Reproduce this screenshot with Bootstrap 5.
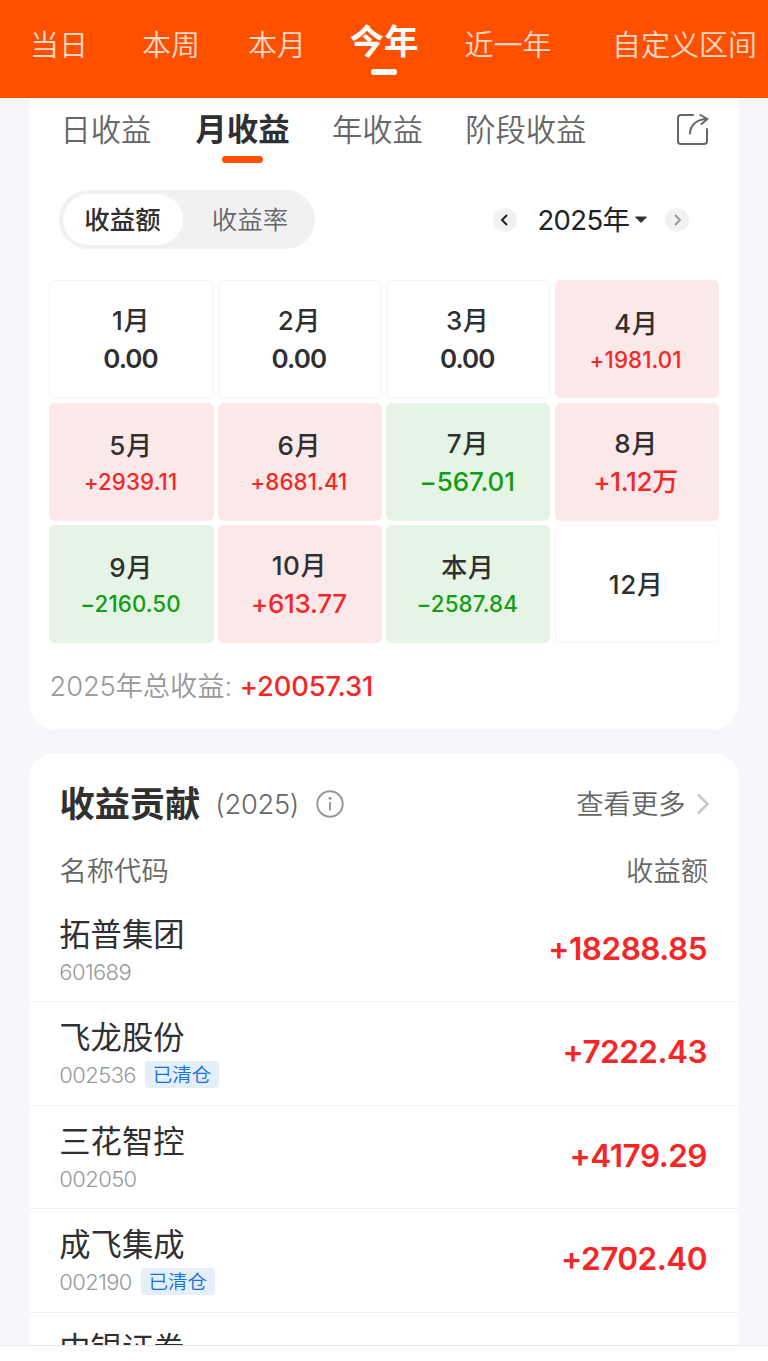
<!DOCTYPE html>
<html lang="zh-CN">
<head>
<meta charset="utf-8">
<meta name="viewport" content="width=device-width, initial-scale=1">
<title>收益分析</title>
<link rel="stylesheet" href="https://cdn.jsdelivr.net/npm/bootstrap@5.3.0/dist/css/bootstrap.min.css">
<style>
  body { font-family: Inter, "Noto Sans CJK SC", sans-serif; background: #f6f7fa; color: #303030; height: 1361px; overflow: hidden; line-height: 1; }
  .period-bar { background: #ff5000; height: 98px; }
  .period-bar .nav-link { flex: none; padding: 0; color: #ffd9c8; font-size: 29px; font-weight: 350; line-height: 92px; height: 98px; text-align: center; white-space: nowrap; }
  .period-bar .nav-link.active { color: #fff; font-size: 34.5px; font-weight: 700; line-height: 83px; }
  .period-bar .nav-link.active::after { content: ""; display: block; width: 26px; height: 6px; margin: -14px auto 0; border-radius: 3px; background: #fff; }
  .w-a { width: 118px; } .w-b { width: 106px; } .w-c { width: 106px; } .w-d { width: 108px; } .w-e { width: 140px; } .w-f { width: 181px; }
  .panel { width: 708px; margin-left: 30px; background: #fff; }
  .panel-top { height: 631px; border-radius: 0 0 24px 24px; }
  .panel-list { height: 593px; margin-top: 24px; border-radius: 24px 24px 0 0; overflow: hidden; }
  .kind-tabs { height: 72px; padding: 0 28px 0 30.5px; }
  .kind-tabs .nav-link { padding: 0; margin-right: 42.3px; color: #666; font-size: 30.3px; font-weight: 350; line-height: 64px; height: 72px; white-space: nowrap; }
  .kind-tabs .nav-link.active { margin-left: 1.5px; color: #303030; font-size: 31.5px; font-weight: 700; }
  .kind-tabs .nav-link.active::after { content: ""; display: block; width: 41px; height: 7px; margin: -6px auto 0; border-radius: 3.5px; background: #ff5000; }
  .mode-row { height: 59px; margin: 20px 49px 0 29px; }
  .seg { width: 256px; height: 59px; padding: 4px; border-radius: 30px; background: #f1f1f4; font-size: 25.5px; }
  .seg > span { line-height: 52px; height: 51px; text-align: center; flex: none; }
  .seg-on { width: 120px; border-radius: 26px; background: #fff; font-weight: 500; padding-right: 1px; }
  .seg-off { width: 134px; color: #666; font-weight: 350; }
  .year { font-size: 27.5px; line-height: 60px; letter-spacing: -.6px; font-weight: 400; color: #222; }
  .next { margin-left: 17.5px; }
  .caret { margin-left: 4px; }
  .months { display: grid; grid-template-columns: repeat(4, 1fr); grid-auto-rows: 118px; gap: 4.2px; margin: 31.4px 19.3px 0 19.4px; }
  .month { border: 1px solid #f3f3f4; border-radius: 6px; font-size: 26px; font-weight: 600; line-height: 38px; padding-top: 2px; letter-spacing: -.9px; }
  .month > span { padding-right: 2px; }
  .month b { font-weight: 500; letter-spacing: .6px; padding-right: 1px; }
  .month .sm-val { font-size: 22.3px; line-height: 33px; letter-spacing: .1px; }
  .gain { background: #fce8e9; border-color: #fce8e9; } .gain > span { color: #f42626; font-weight: 500; letter-spacing: -.3px; }
  .loss { background: #e5f4e5; border-color: #e5f4e5; } .loss > span { color: #129e12; font-weight: 500; letter-spacing: -.1px; }
  .total { margin: 24.5px 20px 0 19.5px; font-size: 27.3px; line-height: 40px; color: #999; font-weight: 350; letter-spacing: -.1px; }
  .red { color: #f42626; }
  .total .red { font-weight: 500; }
  .list-head { height: 102px; padding: 0 28.5px 0 29.5px; }
  .list-head > span { padding-top: 2px; }
  .list-title { font-size: 35.2px; font-weight: 700; }
  .soft { color: #666; font-weight: 350; font-size: 27.3px; }
  .yr-note { letter-spacing: -.3px; margin-left: 15px; }
  .info { margin-left: 16.5px; }
  .cols { height: 44px; line-height: 34px; padding: 0 30px 0 29.5px; }
  .stock { height: 103.4px; padding: 17px 31px 0 29.3px; border-bottom: 1.4px solid #efefef; }
  .stock-name { font-size: 31.3px; line-height: 38px; font-weight: 400; }
  .code { font-size: 22px; line-height: 28px; margin-top: 4px; color: #999; font-weight: 350; letter-spacing: -.6px; }
  .sold { width: 74px; height: 27px; margin-left: 9px; border-radius: 4px; background: #e5effa; color: #1470dc; font-size: 19.5px; font-weight: 350; line-height: 29px; text-align: center; letter-spacing: 0; }
  .amount { font-size: 31.5px; font-weight: 600; line-height: 66px; color: #f42626; letter-spacing: -.5px; }
  .foot { height: 16px; margin-top: -1px; border-top: 1px solid #e9e9ea; background: #fff; position: relative; }
</style>
</head>
<body>
<nav class="nav flex-nowrap period-bar">
  <a class="nav-link w-a">当日</a>
  <a class="nav-link w-b">本周</a>
  <a class="nav-link w-c">本月</a>
  <a class="nav-link w-d active">今年</a>
  <a class="nav-link w-e">近一年</a>
  <a class="nav-link w-f ms-3">自定义区间</a>
</nav>

<section class="panel panel-top">
  <div class="kind-tabs d-flex">
    <a class="nav-link">日收益</a>
    <a class="nav-link active">月收益</a>
    <a class="nav-link">年收益</a>
    <a class="nav-link">阶段收益</a>
    <svg class="ms-auto mt-3 flex-shrink-0" width="34" height="34" viewBox="0 0 34 34" fill="none" stroke="#666" stroke-width="2" stroke-linecap="round" stroke-linejoin="round">
      <path d="M17 1H5Q2 1 2 4V27Q2 30 5 30H28Q31 30 31 27V15M14 19.500C14 12 20 5 31.500 5M24.500 1L31.500 5L25.500 10"/>
    </svg>
  </div>

  <div class="mode-row d-flex align-items-center justify-content-between">
    <div class="seg d-flex"><span class="seg-on">收益额</span><span class="seg-off">收益率</span></div>
    <div class="d-flex align-items-center">
      <svg width="24" height="24" viewBox="0 0 24 24"><circle cx="12" cy="12" r="11.800" fill="#f1f1f4"/><path d="M14 7L9 12L14 17" fill="none" stroke="#222" stroke-width="2"/></svg>
      <span class="year ms-3 ps-1">2025年</span>
      <svg class="caret" width="14" height="8" viewBox="0 0 14 8"><path d="M1.500 1H12.500L7 6.500Z" fill="#303030" stroke="#303030" stroke-linejoin="round"/></svg>
      <svg class="next" width="24" height="24" viewBox="0 0 24 24"><circle cx="12" cy="12" r="11.800" fill="#f1f1f4"/><path d="M10 7L15 12L10 17" fill="none" stroke="#999" stroke-width="1.800"/></svg>
    </div>
  </div>

  <div class="months text-center">
    <div class="month d-flex flex-column justify-content-center"><b>1月</b><span>0.00</span></div>
    <div class="month d-flex flex-column justify-content-center"><b>2月</b><span>0.00</span></div>
    <div class="month d-flex flex-column justify-content-center"><b>3月</b><span>0.00</span></div>
    <div class="month gain d-flex flex-column justify-content-center"><b>4月</b><span class="sm-val">+1981.01</span></div>
    <div class="month gain d-flex flex-column justify-content-center"><b>5月</b><span class="sm-val">+2939.11</span></div>
    <div class="month gain d-flex flex-column justify-content-center"><b>6月</b><span class="sm-val">+8681.41</span></div>
    <div class="month loss d-flex flex-column justify-content-center"><b>7月</b><span>−567.01</span></div>
    <div class="month gain d-flex flex-column justify-content-center"><b>8月</b><span>+1.12万</span></div>
    <div class="month loss d-flex flex-column justify-content-center"><b>9月</b><span class="sm-val">−2160.50</span></div>
    <div class="month gain d-flex flex-column justify-content-center"><b>10月</b><span>+613.77</span></div>
    <div class="month loss d-flex flex-column justify-content-center"><b>本月</b><span class="sm-val">−2587.84</span></div>
    <div class="month d-flex flex-column justify-content-center"><b>12月</b></div>
  </div>

  <div class="total">2025年总收益: <span class="red">+20057.31</span></div>
</section>

<section class="panel panel-list">
  <div class="list-head d-flex align-items-center">
    <span class="list-title">收益贡献</span>
    <span class="soft yr-note">(2025)</span>
    <svg class="info" width="28" height="28" viewBox="0 0 28 28" fill="none" stroke="#999" stroke-width="2"><circle cx="14" cy="14" r="12.700"/><path d="M14 12V20.500"/><circle cx="14" cy="8.300" r="1.500" fill="#999" stroke="none"/></svg>
    <span class="soft ms-auto">查看更多</span>
    <svg class="ms-2" width="16" height="24" viewBox="0 0 16 24"><path d="M4 2.500L13.500 12L4 21.500" fill="none" stroke="#c8c8c8" stroke-width="2.600"/></svg>
  </div>
  <div class="cols soft d-flex justify-content-between"><span>名称代码</span><span>收益额</span></div>
  <div class="stock d-flex justify-content-between">
    <div><div class="stock-name">拓普集团</div><div class="code d-flex">601689</div></div>
    <div class="amount">+18288.85</div>
  </div>
  <div class="stock d-flex justify-content-between">
    <div><div class="stock-name">飞龙股份</div><div class="code d-flex">002536<span class="sold">已清仓</span></div></div>
    <div class="amount">+7222.43</div>
  </div>
  <div class="stock d-flex justify-content-between">
    <div><div class="stock-name">三花智控</div><div class="code d-flex">002050</div></div>
    <div class="amount">+4179.29</div>
  </div>
  <div class="stock d-flex justify-content-between">
    <div><div class="stock-name">成飞集成</div><div class="code d-flex">002190<span class="sold">已清仓</span></div></div>
    <div class="amount">+2702.40</div>
  </div>
  <div class="stock d-flex justify-content-between">
    <div><div class="stock-name">中银证券</div></div>
  </div>
</section>
<div class="foot"></div>
<script src="https://cdn.jsdelivr.net/npm/bootstrap@5.3.0/dist/js/bootstrap.bundle.min.js"></script>
</body>
</html>
